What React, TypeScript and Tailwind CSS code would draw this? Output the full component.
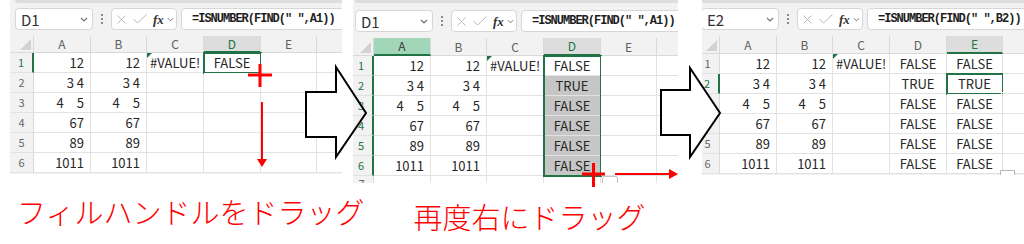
import React from 'react';

type ColKey = 'A' | 'B' | 'C' | 'D' | 'E' | 'F';

const COLS: { k: ColKey; w: string }[] = [
  { k: 'A', w: 'w-[57px]' },
  { k: 'B', w: 'w-[56px]' },
  { k: 'C', w: 'w-[57px]' },
  { k: 'D', w: 'w-[57px]' },
  { k: 'E', w: 'w-[56px]' },
  { k: 'F', w: 'w-[57px]' },
];

const NUMS = ['12', '3 4', '4\u30005', '67', '89', '1011'];
const ROWS = [0, 1, 2, 3, 4, 5];

interface Range {
  col: ColKey;
  from: number;
  to: number;
  gray?: boolean;
  handle?: boolean;
}

interface PanelProps {
  className: string;
  shift: string;
  topH: string;
  gapH: string;
  headH: string;
  name: string;
  formula: string;
  d: string[];
  e: string[];
  activeCol: ColKey;
  greenCol?: ColKey;
  activeRows: number[];
  range: Range;
  partialRow?: boolean;
  icon?: string;
}

const Chevron = ({ w = 8 }: { w?: number }) => (
  <svg width={w} height={5} viewBox="0 0 8 5" className="shrink-0">
    <polyline points="1,1 4,4 7,1" fill="none" stroke="#707070" strokeWidth="1.1" />
  </svg>
);

function FormulaBar({ name, formula }: { name: string; formula: string }) {
  return (
    <div className="flex h-[22px] shrink-0">
      <div className="ml-[5px] w-[78px] shrink-0 flex items-center justify-between pl-[5px] pr-[4px] bg-white border border-[#d6d6d6] rounded-[4px]">
        <span className="text-[15px] leading-none text-[#333]">{name}</span>
        <Chevron />
      </div>
      <div className="w-[18px] shrink-0 flex flex-col items-center justify-center gap-[2px]">
        <span className="w-[2px] h-[2px] rounded-full bg-[#6a6a6a]" />
        <span className="w-[2px] h-[2px] rounded-full bg-[#6a6a6a]" />
        <span className="w-[2px] h-[2px] rounded-full bg-[#6a6a6a]" />
      </div>
      <div className="w-[66px] shrink-0 flex items-center pl-[5px] bg-white border border-[#d6d6d6] rounded-[4px]">
        <svg width="9" height="9" viewBox="0 0 9 9" className="shrink-0">
          <path d="M0.5 0.5 8.5 8.5 M8.5 0.5 0.5 8.5" stroke="#b9b9b9" strokeWidth="1" />
        </svg>
        <svg width="14" height="10" viewBox="0 0 14 10" className="ml-[7px] shrink-0">
          <polyline points="0.5,5 4.5,9 13.5,0.5" fill="none" stroke="#b9b9b9" strokeWidth="1" />
        </svg>
        <span className="ml-[6px] font-['Liberation_Serif',serif] italic font-bold text-[13px] leading-none text-[#333]">
          fx
        </span>
        <span className="ml-[3px]">
          <Chevron w={7} />
        </span>
      </div>
      <div className="ml-[4px] w-[320px] shrink-0 flex items-center pl-[10px] bg-white border border-[#d6d6d6] rounded-[4px] font-['Liberation_Mono',monospace] text-[12px] tracking-[-1px] font-bold text-[#1e1e1e] whitespace-pre">
        {formula}
      </div>
    </div>
  );
}

function DataCell({ k, r, p }: { k: ColKey; r: number; p: PanelProps }) {
  let v = '';
  let align = 'justify-end pr-[6px]';
  if (k === 'A' || k === 'B') v = NUMS[r];
  if (k === 'C' && r === 0) {
    v = '#VALUE!';
    align = 'justify-start pl-[3px]';
  }
  if (k === 'D' && p.d[r]) {
    v = p.d[r];
    align = 'justify-center';
  }
  if (k === 'E' && p.e[r]) {
    v = p.e[r];
    align = 'justify-center';
  }
  const gray = p.range.gray && p.range.col === k && r > p.range.from && r <= p.range.to;
  return (
    <div
      className={`relative h-[20px] shrink-0 flex items-center border-r border-b border-[#e2e2e2] text-[13px] leading-none text-[#262626] whitespace-pre ${
        gray ? 'bg-[#c6c6c6]' : 'bg-white'
      } ${align}`}
    >
      {k === 'C' && r === 0 && (
        <span className="absolute left-0 top-0 w-0 h-0 border-t-[5px] border-t-[#217346] border-r-[5px] border-r-transparent" />
      )}
      {v}
    </div>
  );
}

function Column({ col, p }: { col: { k: ColKey; w: string }; p: PanelProps }) {
  const cells = ROWS.map((r) => <DataCell key={r} k={col.k} r={r} p={p} />);
  const { range } = p;
  const active = p.activeCol === col.k;
  const green = p.greenCol === col.k;
  const head = green
    ? 'bg-[#a2d6b8] text-[#3a3a3a] border-b-2 border-b-[#217346]'
    : active
    ? 'bg-[#dddddd] text-[#217346] border-b-2 border-b-[#217346]'
    : 'text-[#5f5f5f] border-b border-b-[#d9d9d9]';

  return (
    <div className={`${col.w} shrink-0 flex flex-col`}>
      <div className={`${p.headH} shrink-0 flex items-center justify-center text-[12px] leading-none border-r border-r-[#d9d9d9] ${head}`}>
        {col.k}
      </div>
      {range.col === col.k ? (
        <>
          {cells.slice(0, range.from)}
          <div className="relative flex flex-col">
            {cells.slice(range.from, range.to + 1)}
            <span className="pointer-events-none absolute inset-[-1px] border-2 border-[#217346]" />
            {range.handle && (
              <span className="absolute right-[-4px] bottom-[-4px] w-[6px] h-[6px] bg-[#217346] border border-white" />
            )}
          </div>
          {cells.slice(range.to + 1)}
        </>
      ) : (
        cells
      )}
      {p.partialRow && <div className="h-[7px] shrink-0 bg-white border-r border-[#e2e2e2]" />}
    </div>
  );
}

function Panel(p: PanelProps) {
  return (
    <div className={`shrink-0 overflow-hidden bg-[#f1f2f1] ${p.className}`}>
      <div className={`${p.shift} w-[420px] flex flex-col`}>
        <div className={`${p.topH} shrink-0 pl-[5px]`}>
          <div className="h-[3px] bg-[#dcdedc] rounded-b-[3px]" />
        </div>
        <FormulaBar name={p.name} formula={p.formula} />
        <div className={`${p.gapH} shrink-0`} />
        <div className="flex">
          {/* row headers */}
          <div className="w-[24px] shrink-0 flex flex-col">
            <div className={`${p.headH} shrink-0 flex items-end justify-end pr-[2px] pb-[2px] border-r border-b border-[#d9d9d9]`}>
              <svg width="11" height="11" viewBox="0 0 11 11">
                <polygon points="11,0 11,11 0,11" fill="#d2d2d2" />
              </svg>
            </div>
            {ROWS.map((r) => {
              const on = p.activeRows.includes(r);
              return (
                <div
                  key={r}
                  className={`h-[20px] shrink-0 flex items-center justify-center text-[11px] leading-none border-b border-b-[#e2e2e2] ${
                    on ? 'text-[#217346] border-r-2 border-r-[#217346]' : 'text-[#666] border-r border-r-[#d9d9d9]'
                  }`}
                >
                  {r + 1}
                </div>
              );
            })}
            {p.partialRow && (
              <div className="h-[7px] shrink-0 overflow-hidden flex justify-center pt-[2px] text-[11px] leading-none text-[#666] border-r border-[#d9d9d9]">
                7
              </div>
            )}
          </div>
          {COLS.map((c) => (
            <Column key={c.k} col={c} p={p} />
          ))}
        </div>
      </div>
      {p.icon === 'paste' && (
        <span className="absolute left-[249px] top-[176px] w-[16px] h-[10px] bg-white border border-[#c4c4c4] rounded-[2px]" />
      )}
      {p.icon === 'quick' && (
        <span className="absolute left-[298px] top-[170px] w-[15px] h-[8px] bg-white border border-[#b5b5b5] rounded-[1px]" />
      )}
    </div>
  );
}

const ARROW1 = '306,92 336,92 336,67 366,113 336,157 336,137 306,137';
const ARROW2 = '661,90 690,90 690,68 720,113 690,157 690,135 661,135';

export default function App() {
  return (
    <div className="relative w-[1024px] h-[244px] overflow-hidden bg-white font-['Noto_Sans_CJK_JP',sans-serif]">
      <div className="flex items-start">
        <Panel
          className="relative z-0 ml-[10px] w-[332px] h-[174px]"
          shift=""
          topH="h-[8px]"
          gapH="h-[6px]"
          headH="h-[17px]"
          name="D1"
          formula={'=ISNUMBER(FIND(" ",A1))'}
          d={['FALSE', '', '', '', '', '']}
          e={[]}
          activeCol="D"
          activeRows={[0]}
          range={{ col: 'D', from: 0, to: 0 }}
        />
        <Panel
          className="relative z-[2] ml-[11px] w-[325px] h-[183px]"
          shift="ml-[-3px]"
          topH="h-[10px]"
          gapH="h-[6px]"
          headH="h-[18px]"
          name="D1"
          formula={'=ISNUMBER(FIND(" ",A1))'}
          d={['FALSE', 'TRUE', 'FALSE', 'FALSE', 'FALSE', 'FALSE']}
          e={[]}
          activeCol="D"
          greenCol="A"
          activeRows={[0, 1, 2, 3, 4, 5]}
          range={{ col: 'D', from: 0, to: 5, gray: true }}
          partialRow
          icon="paste"
        />
        <Panel
          className="relative z-0 ml-[24px] w-[322px] h-[175px]"
          shift="ml-[-6px]"
          topH="h-[8px]"
          gapH="h-[6px]"
          headH="h-[18px]"
          name="E2"
          formula={'=ISNUMBER(FIND(" ",B2))'}
          d={['FALSE', 'TRUE', 'FALSE', 'FALSE', 'FALSE', 'FALSE']}
          e={['FALSE', 'TRUE', 'FALSE', 'FALSE', 'FALSE', 'FALSE']}
          activeCol="E"
          activeRows={[1]}
          range={{ col: 'E', from: 1, to: 1, handle: true }}
          icon="quick"
        />
      </div>

      {/* captions */}
      <div className="flex items-start text-[29px] leading-none font-light text-[#ff0000]">
        <div className="ml-[17px] mt-[14px]">フィルハンドルをドラッグ</div>
        <div className="ml-[49px] mt-[19px]">再度右にドラッグ</div>
      </div>

      {/* block arrow 1 fill sits under panel 2 */}
      <svg className="pointer-events-none absolute left-0 top-0 z-[1]" width="1024" height="244">
        <polygon points={ARROW1} fill="#fff" />
      </svg>

      <svg className="pointer-events-none absolute left-0 top-0 z-[3]" width="1024" height="244">
        <polygon points={ARROW1} fill="none" stroke="#000" strokeWidth="2" strokeLinejoin="miter" />
        <polygon points={ARROW2} fill="#fff" stroke="#000" strokeWidth="2" strokeLinejoin="miter" />

        {/* fill handle plus, panel 1 */}
        <rect x="248" y="73.5" width="24" height="3" fill="#ff0000" />
        <rect x="258.5" y="64" width="3" height="23" fill="#ff0000" />
        <line x1="262" y1="102" x2="262" y2="160" stroke="#ff0000" strokeWidth="2" />
        <polygon points="257,159 267,159 262,167" fill="#ff0000" />

        {/* fill handle plus, panel 2 */}
        <rect x="582" y="172.5" width="23" height="3" fill="#ff0000" />
        <rect x="592" y="163" width="3" height="24" fill="#ff0000" />
        <line x1="615" y1="174" x2="670" y2="174" stroke="#ff0000" strokeWidth="2" />
        <polygon points="669,169 669,179 678,174" fill="#ff0000" />
      </svg>
    </div>
  );
}
